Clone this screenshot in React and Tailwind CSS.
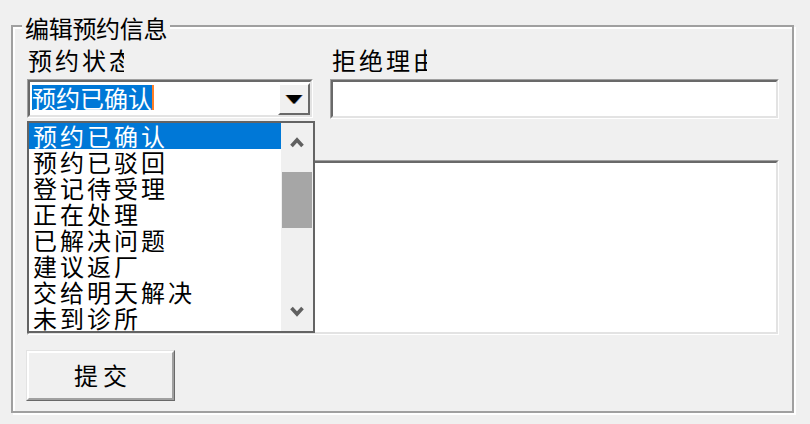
import React from "react";

const F = "font-['Noto_Sans_CJK_SC','Noto_Sans_CJK_JP',sans-serif]";

const items = [
  "预约已确认",
  "预约已驳回",
  "登记待受理",
  "正在处理",
  "已解决问题",
  "建议返厂",
  "交给明天解决",
  "未到诊所",
];

function Sunken({ className = "", innerClassName = "", children }) {
  return (
    <div
      className={
        "border border-t-[#a0a0a0] border-l-[#a0a0a0] border-b-white border-r-white " +
        className
      }
    >
      <div
        className={
          "h-full w-full border-2 border-t-[#696969] border-l-[#696969] border-b-[#e3e3e3] border-r-[#e3e3e3] bg-white " +
          innerClassName
        }
      >
        {children}
      </div>
    </div>
  );
}

function Chevron({ up }) {
  return (
    <svg width="14" height="11" viewBox="0 0 14 11">
      <polyline
        points={up ? "1.5,9 7,3 12.5,9" : "1.5,2 7,8 12.5,2"}
        fill="none"
        stroke="#606060"
        strokeWidth="3.6"
        strokeLinejoin="miter"
      />
    </svg>
  );
}

export default function App() {
  return (
    <div className={"w-[810px] h-[424px] bg-[#f0f0f0] pt-[25px] pl-[11px] " + F}>
      <div className="relative w-[783px] h-[388px] border-2 border-[#a0a0a0] shadow-[inset_2px_2px_0_#fff,2px_2px_0_#fff] pl-[14px] pt-[19px]">
        {/* legend */}
        <div className="absolute left-[9px] top-[-13px] bg-[#f0f0f0] px-[3px] text-[24px] leading-[28px] tracking-[-0.3px] text-black whitespace-nowrap">
          编辑预约信息
        </div>

        {/* top row */}
        <div className="flex gap-[17px]">
          <div className="flex flex-col w-[286px]">
            <div className="h-[28px] w-[97px] overflow-hidden whitespace-nowrap text-[24px] leading-[28px] tracking-[3px] pl-[1px] text-black">
              预约状态
            </div>
            <Sunken className="mt-[5px] h-[39px] w-[286px]" innerClassName="flex items-stretch">
              <div className="flex-1 pl-[2px] pt-[3px]">
                <div className="flex h-[25px] items-stretch">
                  <span className="bg-[#0078d7] text-white text-[24px] leading-[25px] tracking-[0px] whitespace-nowrap">
                    预约已确认
                  </span>
                  <span className="w-[2px] bg-[#ff7f27]" />
                </div>
              </div>
              <div className="w-[32px] flex items-center justify-center bg-[#f0f0f0] border-2 border-t-white border-l-white border-b-[#696969] border-r-[#696969] mt-[1px]">
                <svg width="18" height="11" viewBox="0 0 18 11">
                  <polygon points="0,1 16,1 8,10" fill="#e08a2c" />
                  <polygon points="2,1 18,1 10,10" fill="#3a7bd5" />
                  <polygon points="1,1 17,1 9,10" fill="#000" />
                </svg>
              </div>
            </Sunken>
          </div>
          <div className="flex flex-col w-[449px]">
            <div className="h-[28px] w-[97px] overflow-hidden whitespace-nowrap text-[24px] leading-[28px] tracking-[3px] pl-[2px] text-black">
              拒绝理由
            </div>
            <Sunken className="mt-[5px] h-[40px] w-[449px]" />
          </div>
        </div>

        {/* textarea */}
        <Sunken className="mt-[41px] h-[175px] w-[752px]" />

        {/* submit button */}
        <div className="mt-[15px] ml-[-1px] w-[149px] h-[51px] border border-t-[#e3e3e3] border-l-[#e3e3e3] border-b-[#696969] border-r-[#696969]">
          <div className="h-full w-full border-2 border-t-white border-l-white border-b-[#a0a0a0] border-r-[#a0a0a0] bg-[#f0f0f0] flex items-center justify-center text-[24px] leading-[28px] tracking-[5px] pl-[5px] pb-[2px] text-black">
            提交
          </div>
        </div>

        {/* dropdown list overlay */}
        <div className="absolute left-[14px] top-[94px] w-[288px] h-[212px] border-2 border-[#646464] bg-white flex">
          <div className="flex-1 flex flex-col">
            {items.map((t, i) => (
              <div
                key={t}
                className={
                  "h-[26px] pl-[4px] text-[24px] leading-[26px] tracking-[3px] whitespace-nowrap " +
                  (i === 0 ? "bg-[#0078d7] text-white" : "text-black")
                }
              >
                {t}
              </div>
            ))}
          </div>
          <div className="w-[32px] bg-[#f0f0f0] flex flex-col">
            <div className="h-[34px] flex items-center justify-center pt-[4px]">
              <Chevron up />
            </div>
            <div className="h-[15px]" />
            <div className="h-[56px] bg-[#a6a6a6] mx-[1px]" />
            <div className="flex-1" />
            <div className="h-[34px] flex items-center justify-center pb-[6px]">
              <Chevron />
            </div>
          </div>
        </div>
      </div>
    </div>
  );
}
